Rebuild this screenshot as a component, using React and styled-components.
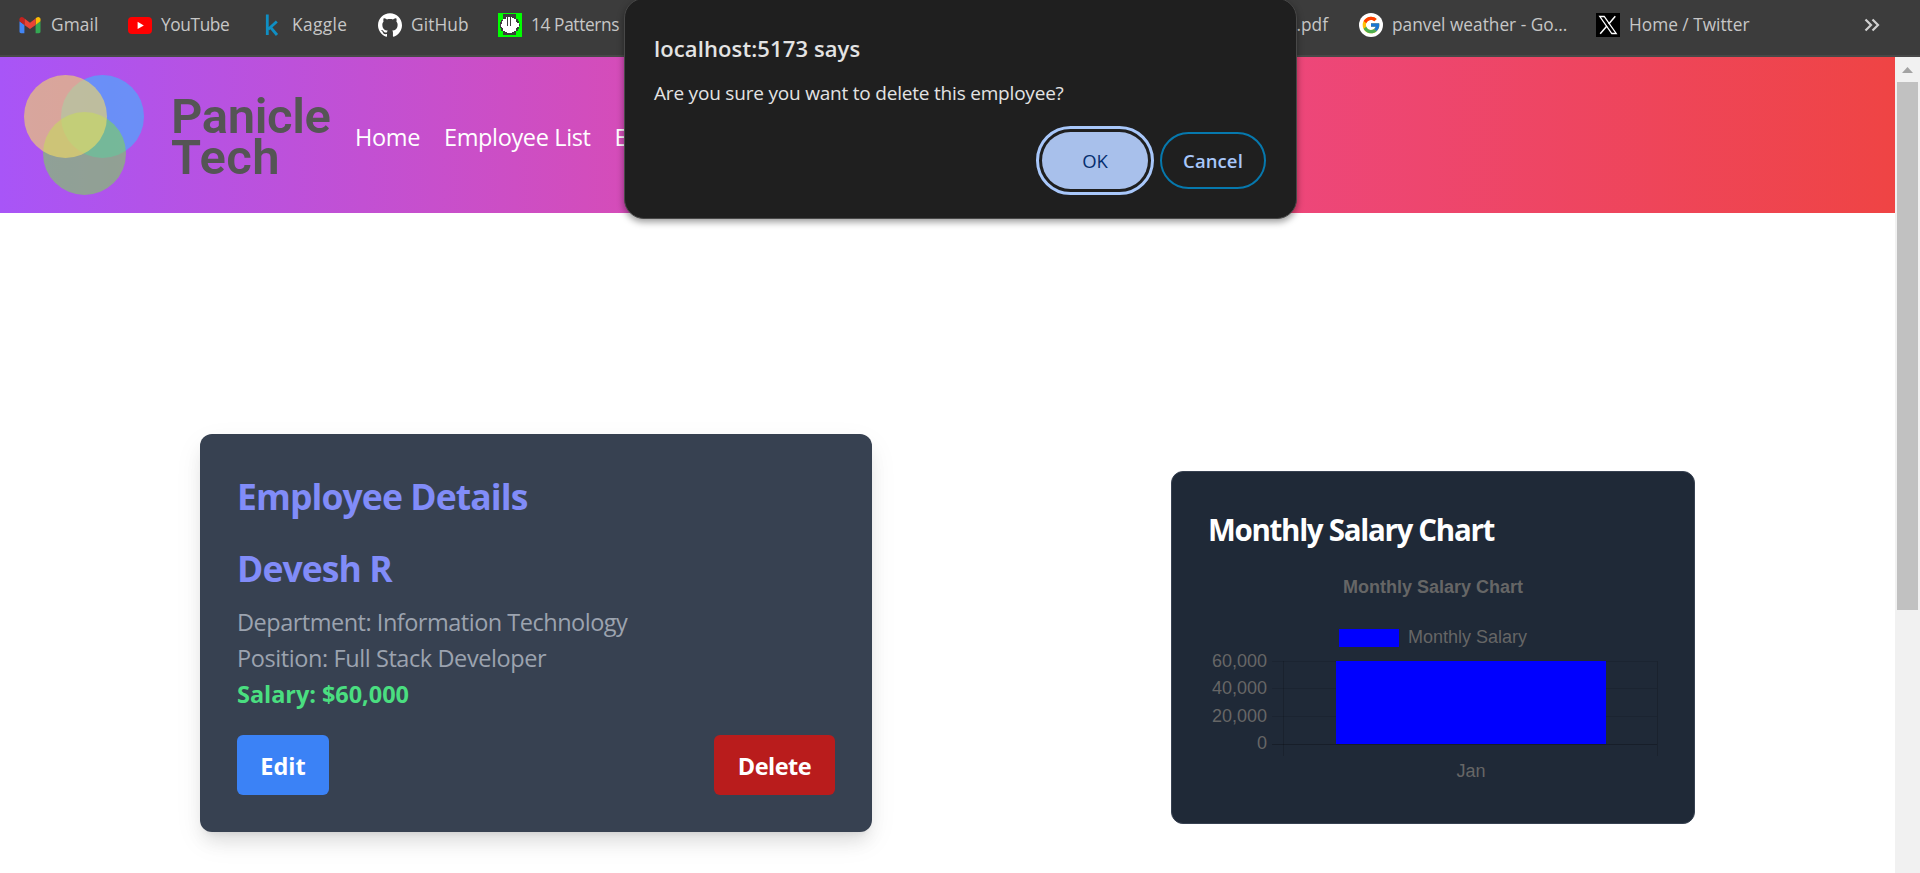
import React from "react";
import styled, { createGlobalStyle, css } from "styled-components";
import { SiGithub } from "react-icons/si";
import { FcGoogle } from "react-icons/fc";

const GlobalStyle = createGlobalStyle`
  *, *::before, *::after { box-sizing: border-box; }
  body { margin: 0; background: #fff; overflow: hidden; font-family: "Open Sans", "Noto Sans", sans-serif; }
  h1, h2, h3, p { margin: 0; }
`;

const Window = styled.div`
  position: relative;
  display: flex;
  flex-direction: column;
  width: 1920px;
  height: 873px;
  overflow: hidden;
`;

/* ---------- bookmarks ---------- */

const BookmarkBar = styled.div`
  display: flex;
  flex: none;
  height: 57px;
  padding: 0 40px 6px 18px;
  background: #3c3c3c;
  border-bottom: 2px solid #484848;
`;

const Bookmark = styled.div`
  display: flex;
  align-items: center;
  flex: none;
  gap: ${(p) => p.$gap ?? 8}px;
  width: ${(p) => p.$width}px;
  justify-content: ${(p) => (p.$end ? "flex-end" : "flex-start")};
  padding-right: ${(p) => (p.$end ? 31 : 0)}px;
  color: #c7c7c7;
  font-size: 17.3px;
  line-height: 24px;
  letter-spacing: ${(p) => p.$ls ?? 0}px;
  white-space: nowrap;

  svg { flex: none; }
`;

const Disc = styled.span`
  display: flex;
  align-items: center;
  justify-content: center;
  width: 24px;
  height: 24px;
  border-radius: 50%;
  background: #fff;
`;

const Overflow = styled.div`
  display: flex;
  align-items: center;
  margin-left: auto;
`;

const GmailIcon = () => (
  <svg width="24" height="24" viewBox="0 0 24 24">
    <path d="M1.5 8.2v10.4c0 1 .7 1.6 1.6 1.6h3.3V11.8z" fill="#4285f4" />
    <path d="M22.5 8.2v10.4c0 1-.7 1.6-1.6 1.6h-3.3V11.8z" fill="#34a853" />
    <path d="M17.6 5.6v6.3l4.9-3.7V6.3c0-2-2.2-3-3.8-1.8z" fill="#fbbc04" />
    <path d="M6.4 11.9V5.6L12 9.700l5.600-4.100v6.300L12 16z" fill="#ea4335" />
    <path d="M1.500 6.300v1.900l4.900 3.700V5.600L5.300 4.500C3.700 3.300 1.500 4.300 1.500 6.300z" fill="#c5221f" />
  </svg>
);

const YouTubeIcon = () => (
  <svg width="24" height="24" viewBox="0 0 24 24">
    <rect x="0" y="4" width="24" height="17" rx="4" fill="#f00" />
    <path d="M9.6 8.8v7.2l6.200-3.600z" fill="#fff" />
  </svg>
);

const KaggleIcon = () => (
  <svg width="24" height="24" viewBox="0 0 24 24" fill="none" stroke="#0f8fc4" strokeWidth="2.800">
    <path d="M7.300 1.500V22M16.800 8.500L8.300 16.300M10.200 13.800L17 22" />
  </svg>
);

const PatternsIcon = () => (
  <svg width="24" height="24" viewBox="0 0 24 24">
    <rect width="24" height="24" fill="#0f0" />
    <path d="M5 1h13v5h2v2h1v3h1v2h-1v3h-1v2h-2v4H5v-4H3v-3H2V9h1V7h2z" fill="#3c3c3c" />
    <path d="M8 4h6v1h2v1h2v3h1v1h2v4h-2v1h-1v3h-2v1h-2v1H9v-1H7v-1H5v-3H4v-1H3v-3h1V8h1V6h3z" fill="#fff" />
    <path d="M9.500 4v9M12.500 4v9" stroke="#3c3c3c" strokeWidth="1" />
  </svg>
);

const XIcon = () => (
  <svg width="24" height="24" viewBox="0 0 24 24" fill="none" stroke="#fff">
    <rect width="24" height="24" fill="#000" stroke="none" />
    <path d="M3.800 3.500h4.400l12 17h-4.400z" strokeWidth="1.300" />
    <path d="M19.300 3.200l-6.600 7.700M10.900 13l-6.700 7.800" strokeWidth="1.500" />
  </svg>
);

/* ---------- page ---------- */

const Viewport = styled.div`
  display: flex;
  flex: 1;
  min-height: 0;
`;

const Page = styled.div`
  flex: 1;
  background: #fff;
`;

const Navbar = styled.nav`
  display: flex;
  align-items: center;
  height: 156px;
  padding-left: 24px;
  background: linear-gradient(to right, #a855f7, #ec4899, #ef4444);
`;

const Wordmark = styled.div`
  width: 184px;
  margin-left: 27px;
  padding-top: 3px;
  color: #555;
  font: 600 49px/41px Roboto, sans-serif;
`;

const WordLine = styled.div`
  padding-left: ${(p) => p.$indent}px;
  letter-spacing: ${(p) => p.$ls}px;
`;

const NavLinks = styled.div`
  display: flex;
  gap: 24px;
  padding-top: 3px;
`;

const NavLink = styled.span`
  color: #fff;
  font-size: 23.5px;
  line-height: 36px;
  letter-spacing: -0.36px;
  white-space: nowrap;
`;

const Main = styled.main`
  display: flex;
  align-items: flex-start;
  gap: 299px;
  padding: 221px 0 0 200px;
`;

const DetailsCard = styled.section`
  width: 672px;
  height: 398px;
  padding: 38px 37px 0 37px;
  border-radius: 12px;
  background: #374151;
  box-shadow: 0 12px 18px -4px rgba(0, 0, 0, 0.1), 0 5px 7px -5px rgba(0, 0, 0, 0.1), 0 10px 30px rgba(0, 0, 0, 0.06);
`;

const Heading = styled.h2`
  color: #818cf8;
  font-size: 35.5px;
  font-weight: 700;
  line-height: 48px;
  letter-spacing: -0.9px;
  margin-bottom: ${(p) => p.$mb}px;
`;

const Detail = styled.p`
  color: #9ca3af;
  font-size: 23.5px;
  line-height: 36px;
  letter-spacing: ${(p) => p.$ls}px;
  ${(p) =>
    p.$salary &&
    css`
      color: #4ade80;
      font-weight: 700;
    `}
`;

const Actions = styled.div`
  display: flex;
  justify-content: space-between;
  margin-top: 23px;
`;

const ActionButton = styled.button`
  width: ${(p) => p.$width}px;
  height: 60px;
  padding: 1px 0 0;
  border: 0;
  border-radius: 6px;
  background: ${(p) => p.$bg};
  color: #fff;
  font: 700 23.5px/36px "Open Sans", sans-serif;
  letter-spacing: ${(p) => p.$ls}px;
`;

const ChartCard = styled.section`
  width: 524px;
  height: 353px;
  margin-top: 37px;
  padding: 35px 36px 0;
  border: 1px solid #374151;
  border-radius: 12px;
  background: #1f2937;
`;

const ChartHeading = styled.h3`
  margin-bottom: 1px;
  color: #fff;
  font-size: 29.5px;
  font-weight: 700;
  line-height: 46px;
  letter-spacing: -1.3px;
  white-space: nowrap;
`;

const ChartSvg = styled.svg`
  display: block;
  overflow: visible;
  font-family: "Liberation Sans", Arial, sans-serif;
  font-size: 18px;
  fill: #666;
`;

const ticks = [
  { label: "60,000", y: 107.5, base: 113 },
  { label: "40,000", y: 134.5, base: 140 },
  { label: "20,000", y: 162.5, base: 168 },
  { label: "0", y: 190.5, base: 195 },
];

const SalaryChart = () => (
  <ChartSvg width="450" height="230" viewBox="0 0 450 230">
    <text x="225" y="39" textAnchor="middle" fontWeight="700">Monthly Salary Chart</text>
    <rect x="131" y="75" width="60" height="18" fill="#00f" />
    <text x="200" y="89">Monthly Salary</text>
    {ticks.map((t) => (
      <g key={t.label}>
        <path d={`M64 ${t.y}H449`} stroke="#000" strokeOpacity={t.label === "0" ? 0.25 : 0.1} />
        <text x="59" y={t.base} textAnchor="end">{t.label}</text>
      </g>
    ))}
    <path d="M75.500 107V202M449.500 107V202" stroke="#000" strokeOpacity="0.15" />
    <rect x="128" y="107" width="270" height="83" fill="#00f" />
    <text x="263" y="223" textAnchor="middle">Jan</text>
  </ChartSvg>
);

const Scrollbar = styled.div`
  display: flex;
  flex-direction: column;
  align-items: center;
  width: 25px;
  background: #f1f1f1;
`;

const ScrollArrow = styled.div`
  display: flex;
  justify-content: center;
  height: 25px;
  padding-top: 10px;
`;

const ScrollThumb = styled.div`
  width: 21px;
  height: 528px;
  background: #c1c1c1;
`;

/* ---------- confirm dialog ---------- */

const Dialog = styled.div`
  position: absolute;
  top: -2px;
  left: 624px;
  width: 673px;
  height: 221px;
  padding: 34px 30px 0 29px;
  border: 1px solid #484848;
  border-radius: 20px;
  background: #1f1f1f;
  box-shadow: 0 3px 7px rgba(0, 0, 0, 0.4);
`;

const DialogTitle = styled.h1`
  color: #e3e3e3;
  font-size: 22px;
  font-weight: 600;
  line-height: 30px;
  letter-spacing: 0.11px;
`;

const DialogText = styled.p`
  margin-top: 16px;
  color: #e3e3e3;
  font-size: 19px;
  line-height: 28px;
  letter-spacing: -0.2px;
`;

const DialogActions = styled.div`
  display: flex;
  justify-content: flex-end;
  gap: 12px;
  margin-top: 25px;
`;

const DialogButton = styled.button`
  width: 106px;
  height: 57px;
  padding: 0;
  border-radius: 29px;
  ${(p) =>
    p.$primary
      ? css`
          border: 0;
          background: #a8c0eb;
          color: #062e6f;
          font: 500 18.5px/24px "Open Sans", sans-serif;
          outline: 3px solid #a8c7fa;
          outline-offset: 3px;
        `
      : css`
          border: 2px solid #0678ad;
          background: transparent;
          color: #a8c7fa;
          font: 600 18.5px/24px "Open Sans", sans-serif;
          letter-spacing: 0.1px;
        `}
`;

export default function App() {
  return (
    <Window>
      <GlobalStyle />
      <BookmarkBar>
        <Bookmark $width={110} $ls={0.1} $gap={9}><GmailIcon />Gmail</Bookmark>
        <Bookmark $width={132} $ls={-0.38} $gap={9}><YouTubeIcon />YouTube</Bookmark>
        <Bookmark $width={118} $ls={0.4}><KaggleIcon />Kaggle</Bookmark>
        <Bookmark $width={120} $ls={0.1} $gap={9}><SiGithub size={24} color="#fff" />GitHub</Bookmark>
        <Bookmark $width={144} $ls={-0.38} $gap={9}><PatternsIcon />14 Patterns</Bookmark>
        <Bookmark $width={717} $end>.pdf</Bookmark>
        <Bookmark $width={237} $gap={9}><Disc><FcGoogle size={20} /></Disc>panvel weather - Go...</Bookmark>
        <Bookmark $width={180} $gap={9}><XIcon />Home / Twitter</Bookmark>
        <Overflow>
          <svg width="16" height="14" viewBox="0 0 16 14" fill="none" stroke="#d0d0d0" strokeWidth="2.2">
            <path d="M1.5 1.500L7 7l-5.500 5.500M8.500 1.500L14 7l-5.500 5.500" />
          </svg>
        </Overflow>
      </BookmarkBar>

      <Viewport>
        <Page>
          <Navbar>
            <svg width="120" height="120" viewBox="0 0 120 120" fillOpacity="0.6">
              <circle cx="78.5" cy="41.5" r="41.5" fill="#3cb7ff" />
              <circle cx="60.5" cy="78.5" r="41.5" fill="#7dd35a" />
              <circle cx="41.5" cy="41.5" r="41.5" fill="#f7dc62" />
            </svg>
            <Wordmark>
              <WordLine $indent={0} $ls={-0.4}>Panicle</WordLine>
              <WordLine $indent={-1} $ls={0.5}>Tech</WordLine>
            </Wordmark>
            <NavLinks>
              <NavLink>Home</NavLink>
              <NavLink>Employee List</NavLink>
              <NavLink>E</NavLink>
            </NavLinks>
          </Navbar>
          <Main>
            <DetailsCard>
              <Heading $mb={24}>Employee Details</Heading>
              <Heading $mb={12}>Devesh R</Heading>
              <Detail $ls={-0.49}>Department: Information Technology</Detail>
              <Detail $ls={-0.41}>Position: Full Stack Developer</Detail>
              <Detail $salary $ls={-0.05}>Salary: $60,000</Detail>
              <Actions>
                <ActionButton $width={92} $bg="#3b82f6" $ls={0}>Edit</ActionButton>
                <ActionButton $width={121} $bg="#b91c1c" $ls={-0.5}>Delete</ActionButton>
              </Actions>
            </DetailsCard>
            <ChartCard>
              <ChartHeading>Monthly Salary Chart</ChartHeading>
              <SalaryChart />
            </ChartCard>
          </Main>
        </Page>
        <Scrollbar>
          <ScrollArrow>
            <svg width="11" height="6" viewBox="0 0 11 6"><path d="M5.5 0L11 6H0z" fill="#a3a3a3" /></svg>
          </ScrollArrow>
          <ScrollThumb />
        </Scrollbar>
      </Viewport>

      <Dialog>
        <DialogTitle>localhost:5173 says</DialogTitle>
        <DialogText>Are you sure you want to delete this employee?</DialogText>
        <DialogActions>
          <DialogButton $primary>OK</DialogButton>
          <DialogButton>Cancel</DialogButton>
        </DialogActions>
      </Dialog>
    </Window>
  );
}
